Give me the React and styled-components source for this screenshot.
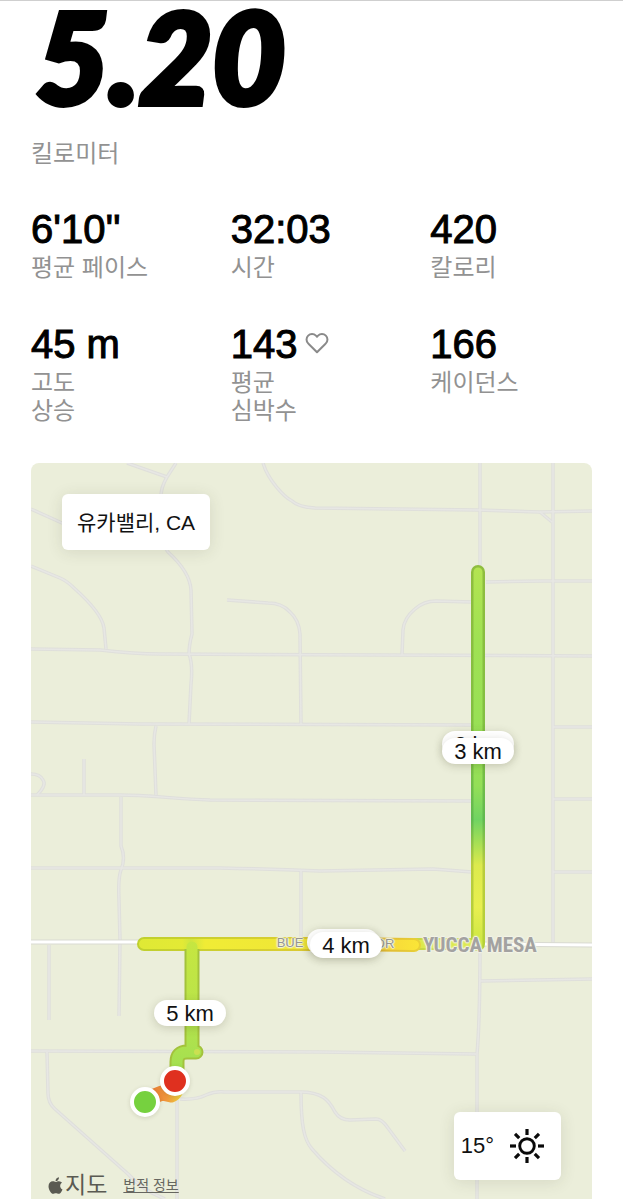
import React from "react";
import styled, { createGlobalStyle } from "styled-components";
import { FaApple } from "react-icons/fa";

const GlobalStyle = createGlobalStyle`
  *, *::before, *::after { box-sizing: border-box; }
  body {
    margin: 0;
    background: #fff;
    color: #0a0a0a;
    font-family: "Liberation Sans", "Noto Sans CJK KR", sans-serif;
  }
`;

const Page = styled.main`
  border-top: 1px solid #cfcfcf;
  padding: 5px 31px 0;
`;

const Distance = styled.h1`
  margin: 0;
  padding-left: 5px;
  font: italic 900 126px/100px Lato, sans-serif;
  color: #000;
  -webkit-text-stroke: 6px #000;
`;

const Caption = styled.p`
  margin: 0;
  font-size: 24px;
  line-height: 28px;
  color: #929292;
`;

const Summary = styled.header`
  display: flex;
  flex-direction: column;
  gap: 34px;
  margin-bottom: 39px;
`;

const StatGrid = styled.dl`
  display: grid;
  grid-template-columns: repeat(3, 1fr);
  gap: 40px 38px;
  margin: 0 0 38px;
`;

const Stat = styled.div`
  display: flex;
  flex-direction: column-reverse;
  justify-content: flex-end;
  gap: 3px;
`;

const StatLabel = styled.dt`
  font-size: 24px;
  line-height: 28px;
  color: #929292;
  white-space: pre-line;
`;

const StatValue = styled.dd`
  display: flex;
  align-items: center;
  gap: 8px;
  margin: 0;
  font-size: 40px;
  line-height: 44px;
  color: #000;
  -webkit-text-stroke: 1px #000;

  svg {
    margin-bottom: 2px;
  }
`;

const MapPanel = styled.section`
  position: relative;
  aspect-ratio: 561 / 736;
  overflow: hidden;
  border-radius: 8px 8px 0 0;
  background: #ebeeda;
`;

const MapDrawing = styled.svg`
  display: block;
  width: 100%;
  height: 100%;
`;

const Card = styled.div`
  position: absolute;
  display: flex;
  align-items: center;
  background: #fff;
  border-radius: 6px;
  box-shadow: 0 2px 16px rgba(60, 60, 30, 0.12);
  color: #111;
`;

const PlaceCard = styled(Card)`
  top: 31px;
  left: 31px;
  height: 56px;
  padding: 0 15px 2px;
  font-size: 21px;
`;

const WeatherCard = styled(Card)`
  right: 31px;
  bottom: 19px;
  height: 68px;
  gap: 15px;
  padding: 0 16px 0 7px;
  font-size: 22px;
`;

const Spot = styled.div`
  position: absolute;
  left: ${(p) => ((p.$x - 31) / 561) * 100}%;
  top: ${(p) => ((p.$y - 463) / 736) * 100}%;
  transform: translate(-50%, -50%);
  white-space: nowrap;
`;

const KmPill = styled(Spot)`
  width: 72px;
  height: 26px;
  border-radius: 13px;
  background: #fff;
  box-shadow: 0 2px 10px rgba(60, 60, 30, 0.2);
  font-size: 22px;
  line-height: 27px;
  text-align: center;
  color: #111;
`;

const EndDot = styled(Spot)`
  width: 30px;
  height: 30px;
  border: 4px solid #fff;
  border-radius: 50%;
  background: ${(p) => p.$color};
  box-shadow: 0 1px 4px rgba(60, 60, 30, 0.15);
`;

const halo = `
  text-shadow: 1px 0 1px #f3f4e8, -1px 0 1px #f3f4e8, 0 1px 1px #f3f4e8,
    0 -1px 1px #f3f4e8, 0 0 3px #f3f4e8;
`;

const StreetName = styled(Spot)`
  font-size: 13px;
  color: #96968f;
  ${halo}
`;

const TownName = styled(Spot)`
  font: bold 21px "Liberation Sans Narrow", "Roboto Condensed", "Liberation Sans", sans-serif;
  color: #a3a2a1;
  ${halo}
`;

const Attribution = styled.footer`
  position: absolute;
  left: 15px;
  bottom: 0;
  display: flex;
  align-items: center;
  gap: 16px;
  color: #5a5a52;
`;

const MapsBrand = styled.span`
  display: flex;
  align-items: center;
  font-size: 23px;
  line-height: 28px;
`;

const LegalLink = styled.a`
  font-size: 14px;
  line-height: 20px;
  color: #666660;
  text-decoration: underline;
  text-underline-offset: 2px;
`;

const roads = [
  "M127 463 L167 477",
  "M176 463 L167 477 Q160 489 161 500 C161 530 163 546 168 552 Q190 572 191 590 L192 634 Q189 645 189 654 Q193 664 191 684 L189 724",
  "M31 509 L62 523 L110 544",
  "M31 566 L60 578 Q67 581 74 588 Q102 613 104 628 L106 649",
  "M31 649 L100 650 Q135 654 160 654 L592 656",
  "M263 463 C268 480 284 497 292 501 Q298 507 315 508 L477 510 L540 512 L592 511",
  "M540 512 L552 522",
  "M227 600 L268 603 Q282 603 290 612 Q299 620 300 634 L301 724",
  "M480 463 L480 571",
  "M553 463 L553 944",
  "M486 582 L543 581 L592 581",
  "M472 602 L436 601 Q424 601 415 609 Q404 618 403 630 L402 655",
  "M31 722 L140 724 L472 725",
  "M553 727 L592 727",
  "M156 726 Q154 734 154 744 L156 795",
  "M84 759 V795",
  "M31 774 Q40 774 43 780 Q47 785 37 795",
  "M31 795 H120 C150 795 175 799 210 800 L472 801",
  "M553 799 H592",
  "M121 797 V846 Q126 858 121 870 Q118 878 119 900 L120 940 L119 1016",
  "M31 868 H220 Q270 869 320 871 L433 869 L472 872",
  "M553 872 H592",
  "M301 871 V942",
  "M49 945 V1020",
  "M31 1051 L320 1052 L476 1054",
  "M480 946 Q480 1020 477 1054 L477 1199",
  "M480 981 L592 979",
  "M47 1052 L48 1093 Q48 1103 55 1109 L128 1174 Q142 1190 165 1199",
  "M177 1100 V1199",
  "M180 1099 Q196 1100 206 1095 Q216 1091 224 1092 H300 C322 1092 329 1100 335 1112 Q340 1120 350 1120 L376 1119 Q382 1119 388 1128 L405 1151",
  "M301 1092 C301 1125 304 1140 312 1149 Q343 1185 385 1199",
];

const highway = "M31 942 H145 M478 944 L592 945";
const northLeg = "M478 572 V944";
const junction = "M412 944 H478";
const westLeg = "M144 944 H340 L414 945";
const southLeg = "M192 947 V1052 H196 H187 Q177 1052 177 1062 V1078";
const startLeg = "M147 1099 L162 1093 L171 1095 Q178 1092 176 1083";

const stats = [
  { label: "평균 페이스", value: "6'10''" },
  { label: "시간", value: "32:03" },
  { label: "칼로리", value: "420" },
  { label: "고도\n상승", value: "45 m" },
  { label: "평균\n심박수", value: "143", heart: true },
  { label: "케이던스", value: "166" },
];

function HeartIcon() {
  return (
    <svg width="24" height="24" viewBox="0 0 24 24" fill="none" stroke="#8a8a8a" strokeWidth="2" strokeLinejoin="round" aria-hidden="true">
      <path d="M20.84 4.61a5.5 5.5 0 0 0-7.78 0L12 5.67l-1.06-1.06a5.5 5.5 0 0 0-7.78 7.78l1.06 1.06L12 21.23l7.78-7.78 1.06-1.06a5.5 5.5 0 0 0 0-7.78z" />
    </svg>
  );
}

function SunIcon() {
  return (
    <svg width="36" height="36" viewBox="-18 -18 36 36" fill="none" stroke="#0a0a0a" role="img" aria-label="맑음">
      <circle r="7.3" strokeWidth="2.9" />
      {[0, 45, 90, 135, 180, 225, 270, 315].map((a) => (
        <path key={a} d="M0 -11V-17" strokeWidth="3.2" transform={`rotate(${a})`} />
      ))}
    </svg>
  );
}

function Terrain() {
  return (
    <MapDrawing viewBox="31 463 561 736" preserveAspectRatio="xMidYMin slice" aria-hidden="true">
      <defs>
        <linearGradient id="north" gradientUnits="userSpaceOnUse" x1="0" y1="565" x2="0" y2="945">
          <stop offset="0" stopColor="#b4e451" />
          <stop offset="0.2" stopColor="#9fe153" />
          <stop offset="0.58" stopColor="#94df57" />
          <stop offset="0.67" stopColor="#70d362" />
          <stop offset="0.73" stopColor="#a5df55" />
          <stop offset="0.79" stopColor="#dcea4d" />
          <stop offset="0.9" stopColor="#e8ef50" />
          <stop offset="1" stopColor="#cbe643" />
        </linearGradient>
        <linearGradient id="northEdge" gradientUnits="userSpaceOnUse" x1="0" y1="565" x2="0" y2="945">
          <stop offset="0" stopColor="#8fbd3e" />
          <stop offset="0.5" stopColor="#7fc043" />
          <stop offset="0.67" stopColor="#60b951" />
          <stop offset="0.79" stopColor="#b9cc3e" />
          <stop offset="1" stopColor="#b5d038" />
        </linearGradient>
        <linearGradient id="west" gradientUnits="userSpaceOnUse" x1="137" y1="0" x2="420" y2="0">
          <stop offset="0" stopColor="#dfe935" />
          <stop offset="0.16" stopColor="#e3ea35" />
          <stop offset="0.19" stopColor="#cfe53f" />
          <stop offset="0.24" stopColor="#f0ec35" />
          <stop offset="0.6" stopColor="#f0e636" />
          <stop offset="0.86" stopColor="#f6d63a" />
          <stop offset="1" stopColor="#fae637" />
        </linearGradient>
        <linearGradient id="westEdge" gradientUnits="userSpaceOnUse" x1="137" y1="0" x2="420" y2="0">
          <stop offset="0" stopColor="#bfd02e" />
          <stop offset="0.5" stopColor="#d8ce31" />
          <stop offset="0.85" stopColor="#dfb532" />
          <stop offset="1" stopColor="#e9d137" />
        </linearGradient>
        <linearGradient id="south" gradientUnits="userSpaceOnUse" x1="0" y1="940" x2="0" y2="1080">
          <stop offset="0" stopColor="#c6e640" />
          <stop offset="0.5" stopColor="#b9e44a" />
          <stop offset="1" stopColor="#9fdf52" />
        </linearGradient>
        <linearGradient id="start" gradientUnits="userSpaceOnUse" x1="150" y1="0" x2="182" y2="0">
          <stop offset="0" stopColor="#e67a34" />
          <stop offset="0.5" stopColor="#f0953b" />
          <stop offset="1" stopColor="#ecd33f" />
        </linearGradient>
      </defs>
      <g fill="none" stroke="#dfdfdb" strokeWidth="3.5">
        {roads.map((d) => <path key={d} d={d} />)}
      </g>
      <g fill="none" stroke="#e7e7e4" strokeWidth="1.5">
        {roads.map((d) => <path key={d} d={d} />)}
      </g>
      <path d={highway} stroke="#d9dad2" strokeWidth="5" />
      <path d={highway} stroke="#fff" strokeWidth="3" />
      <g fill="none" strokeLinecap="round" strokeLinejoin="round">
        <path d={startLeg} stroke="url(#start)" strokeWidth="15" />
        <path d={junction} stroke="#c8d844" strokeWidth="12" />
        <path d={northLeg} stroke="url(#northEdge)" strokeWidth="14" />
        <path d={junction} stroke="#dce94c" strokeWidth="8" />
        <path d={northLeg} stroke="url(#north)" strokeWidth="9" />
        <path d={westLeg} stroke="url(#westEdge)" strokeWidth="14" />
        <path d={southLeg} stroke="#a3c23c" strokeWidth="15" />
        <path d={westLeg} stroke="url(#west)" strokeWidth="10" />
        <path d={southLeg} stroke="url(#south)" strokeWidth="11" />
        <circle cx="197" cy="1052" r="3" fill="#cbe052" />
      </g>
    </MapDrawing>
  );
}

export default function App() {
  return (
    <>
      <GlobalStyle />
      <Page>
        <Summary>
          <Distance>5.20</Distance>
          <Caption>킬로미터</Caption>
        </Summary>
        <StatGrid>
          {stats.map((s) => (
            <Stat key={s.label}>
              <StatLabel>{s.label}</StatLabel>
              <StatValue>
                {s.value}
                {s.heart && <HeartIcon />}
              </StatValue>
            </Stat>
          ))}
        </StatGrid>
        <MapPanel aria-label="지도">
          <Terrain />
          <StreetName $x={290} $y={942}>BUE</StreetName>
          <StreetName $x={385} $y={943}>DR</StreetName>
          <TownName $x={480} $y={945}>YUCCA MESA</TownName>
          <KmPill $x={478} $y={744}>2 km</KmPill>
          <KmPill $x={478} $y={751}>3 km</KmPill>
          <KmPill $x={343} $y={942} />
          <KmPill $x={346} $y={945}>4 km</KmPill>
          <KmPill $x={190} $y={1013}>5 km</KmPill>
          <EndDot $x={145} $y={1102} $color="#76d13f" />
          <EndDot $x={175} $y={1081} $color="#df301f" />
          <PlaceCard>유카밸리, CA</PlaceCard>
          <WeatherCard>
            <span>15°</span>
            <SunIcon />
          </WeatherCard>
          <Attribution>
            <MapsBrand>
              <FaApple size={19} aria-hidden="true" />
              지도
            </MapsBrand>
            <LegalLink href="#legal">법적 정보</LegalLink>
          </Attribution>
        </MapPanel>
      </Page>
    </>
  );
}
